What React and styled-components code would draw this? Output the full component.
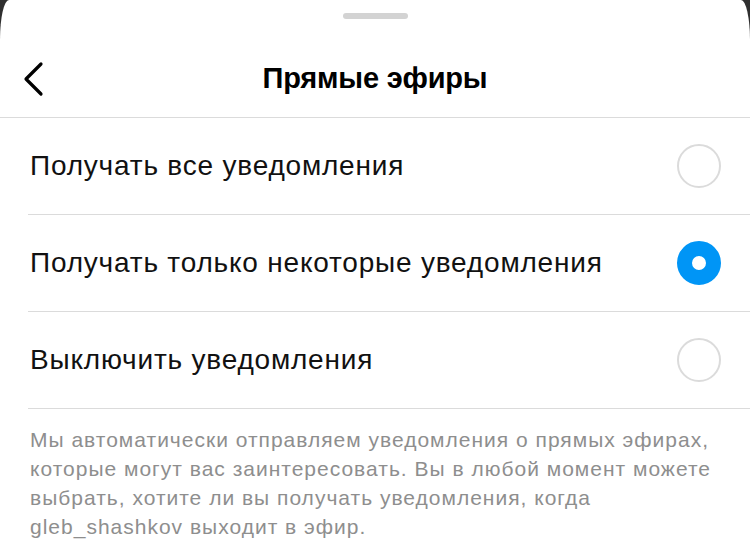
import React, { useState } from 'react';
import styled, { createGlobalStyle } from 'styled-components';

const GlobalStyle = createGlobalStyle`
  html, body {
    margin: 0;
    padding: 0;
    background: #2f2f2f;
  }
  body {
    font-family: "Liberation Sans", Arial, sans-serif;
    -webkit-font-smoothing: antialiased;
  }
`;

/* bottom sheet */
const Sheet = styled.div`
  width: 750px;
  height: 552px;
  background: #fff;
  border-radius: 9px 9px 0 0 / 40px 40px 0 0;
  overflow: hidden;
  display: flex;
  flex-direction: column;
`;

const HandleZone = styled.div`
  height: 40px;
  display: flex;
  justify-content: center;
  padding-top: 13px;
  box-sizing: border-box;
`;

const Handle = styled.div`
  width: 65px;
  height: 6px;
  border-radius: 3px;
  background: #d3d3d3;
`;

const Header = styled.div`
  height: 78px;
  display: grid;
  grid-template-columns: 80px 1fr 80px;
  align-items: center;
  border-bottom: 1px solid #dbdbdb;
  box-sizing: border-box;
`;

const BackButton = styled.button`
  border: 0;
  background: none;
  padding: 0 0 0 22px;
  height: 40px;
  display: flex;
  align-items: center;
  cursor: pointer;
`;

const Title = styled.h1`
  margin: 0;
  text-align: center;
  font-size: 29px;
  font-weight: 700;
  color: #000;
  letter-spacing: -0.2px;
`;

const Options = styled.div`
  padding-left: 28px;
`;

const Row = styled.label`
  height: 97px;
  display: flex;
  align-items: center;
  justify-content: space-between;
  padding: 0 29px 0 2px;
  border-bottom: 1px solid #dbdbdb;
  box-sizing: border-box;
  cursor: pointer;
`;

const RowText = styled.span`
  font-size: 28px;
  letter-spacing: 0.8px;
  color: #111;
`;

const Radio = styled.span`
  width: 44px;
  height: 44px;
  border-radius: 50%;
  box-sizing: border-box;
  flex-shrink: 0;
  border: ${(p) => (p.checked ? '15px solid #0095f6' : '2px solid #dbdbdb')};
  background: #fff;
`;

const Note = styled.p`
  margin: 0;
  padding: 16px 26px 0 30px;
  font-size: 21px;
  line-height: 29px;
  letter-spacing: 1px;
  color: #8e8e8e;
`;

const ChevronLeft = () => (
  <svg width="22" height="36" viewBox="0 0 22 36" fill="none">
    <path d="M19 3 L4 18 L19 33" stroke="#000" strokeWidth="3.2" strokeLinecap="round" strokeLinejoin="round" />
  </svg>
);

const options = [
  'Получать все уведомления',
  'Получать только некоторые уведомления',
  'Выключить уведомления',
];

export default function App() {
  const [selected, setSelected] = useState(1);

  return (
    <>
      <GlobalStyle />
      <Sheet>
        <HandleZone>
          <Handle />
        </HandleZone>
        <Header>
          <BackButton aria-label="Назад">
            <ChevronLeft />
          </BackButton>
          <Title>Прямые эфиры</Title>
          <div />
        </Header>
        <Options>
          {options.map((label, i) => (
            <Row key={label} onClick={() => setSelected(i)}>
              <RowText>{label}</RowText>
              <Radio checked={selected === i} />
            </Row>
          ))}
        </Options>
        <Note>
          Мы автоматически отправляем уведомления о прямых эфирах, которые могут вас
          заинтересовать. Вы в любой момент можете выбрать, хотите ли вы получать
          уведомления, когда gleb_shashkov выходит в эфир.
        </Note>
      </Sheet>
    </>
  );
}
